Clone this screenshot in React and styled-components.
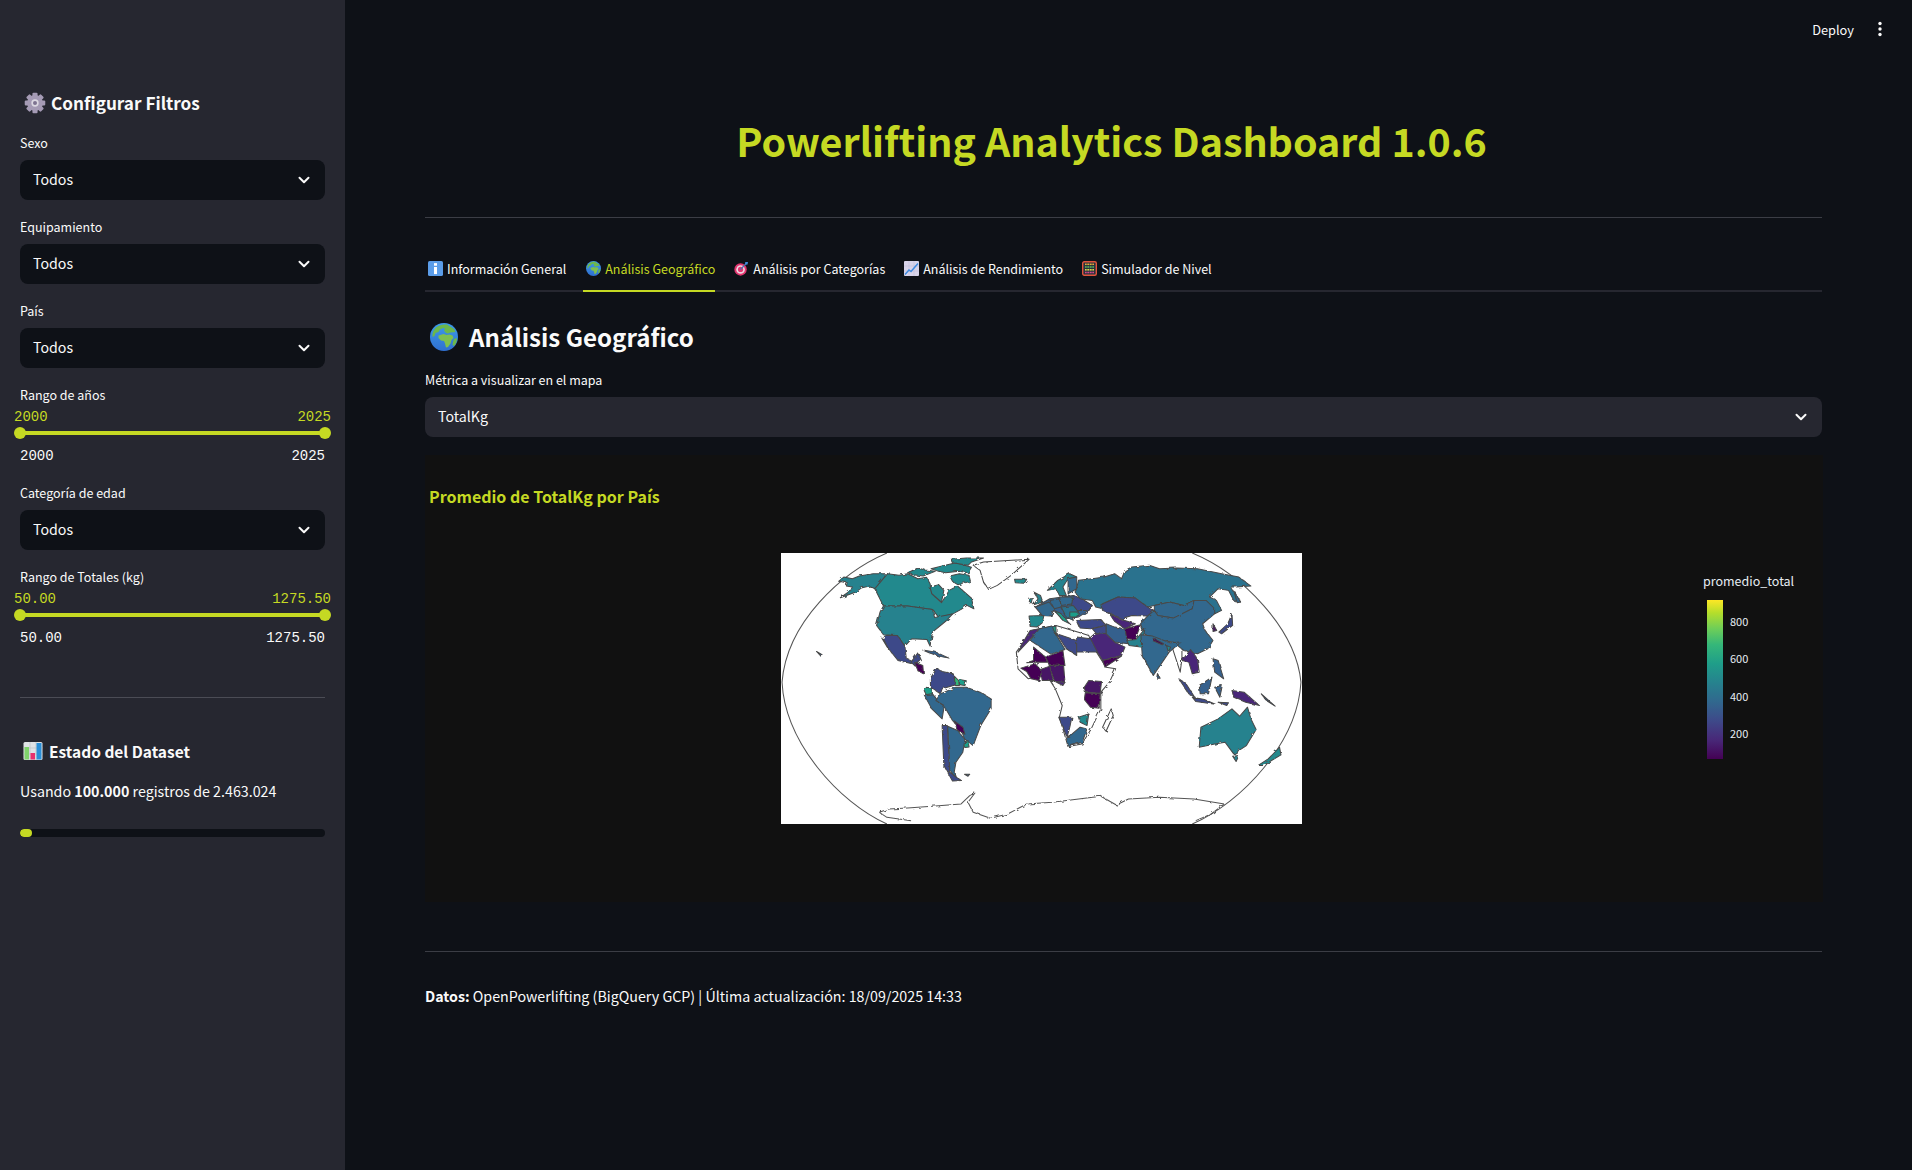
import React from 'react';
import styled, { createGlobalStyle } from 'styled-components';

const LIME = '#c5d923';
const SANS = '"Noto Sans CJK SC", "Noto Sans", sans-serif';
const MONO = '"Liberation Mono", monospace';

const Global = createGlobalStyle`
  html, body { margin: 0; padding: 0; background: #0e1117; }
  body { font-family: ${SANS}; color: #fafafa; overflow: hidden; }
  * { box-sizing: border-box; }
`;

const Page = styled.div`display: flex; width: 1912px; height: 1170px; position: relative; overflow: hidden;`;
const Sidebar = styled.aside`width: 345px; flex: none; background: #262730; padding: 88px 20px 0;`;
const SideTitle = styled.h2`display: flex; align-items: center; gap: 5px; margin: 0 0 15px; padding-left: 4px; height: 30px; font-size: 17.2px; line-height: 30px; font-weight: 700;`;
const Field = styled.div`margin-bottom: 17px;`;
const Label = styled.div`font-size: 12.5px; line-height: 20px; height: 20px; color: #fafafa;`;
const Select = styled.div`display: flex; align-items: center; justify-content: space-between; height: 40px; margin-top: 7px; padding: 0 13px 2px; border-radius: 8px; background: ${p => p.$bg}; font-size: 14.2px; line-height: 38px; color: #fafafa;`;
const SliderWrap = styled.div`margin-bottom: 19px;`;
const ThumbValues = styled.div`display: flex; justify-content: space-between; margin: 4px -6px 0; height: 16px; font: 14px/16px ${MONO}; color: ${LIME};`;
const Track = styled.div`display: flex; align-items: center; justify-content: space-between; height: 12px; margin: 2px 0 0; position: relative;
  &::before { content: ''; position: absolute; left: 0; right: 0; top: 4px; height: 4px; background: ${LIME}; }`;
const Handle = styled.span`width: 12px; height: 12px; border-radius: 50%; background: ${LIME}; position: relative; margin: 0 -6px;`;
const Ticks = styled.div`display: flex; justify-content: space-between; margin-top: 9px; height: 16px; font: 14px/16px ${MONO}; color: #fafafa;`;
const SideRule = styled.hr`border: 0; height: 1px; background: #4b4c55; margin: 51px 0 0;`;
const StatusTitle = styled.h3`display: flex; align-items: center; gap: 6px; margin: 39px 0 0; padding-left: 3px; height: 28px; font-size: 15.5px; line-height: 28px; font-weight: 700;`;
const StatusText = styled.p`margin: 14px 0 0; font-size: 14.25px; line-height: 24px; color: #fafafa; b { font-weight: 700; }`;
const Progress = styled.div`height: 8px; margin-top: 26px; border-radius: 4px; background: #0e1117; overflow: hidden;`;
const ProgressFill = styled.div`height: 100%; border-radius: 4px; background: ${LIME};`;

const Main = styled.main`flex: 1; min-width: 0; padding: 110px 90px 0 80px;`;
const Toolbar = styled.div`position: absolute; top: 17px; right: 29px; display: flex; align-items: center; gap: 23px; height: 24px; font-size: 12.8px; color: #fafafa;`;
const Title = styled.h1`margin: 0; padding-right: 24px; height: 64px; line-height: 60px; text-align: center; font-size: 39.4px; font-weight: 700; color: ${LIME};`;
const Rule = styled.hr`border: 0; height: 1px; background: #3b3d45; margin: ${p => p.$mt}px 0 0;`;
const Tabs = styled.div`display: flex; gap: 16px; height: 43px; margin-top: 31px; border-bottom: 2px solid #262730;`;
const Tab = styled.div`display: flex; align-items: center; gap: 4px; height: 43px; padding: 0 0 2px 3px; font-size: 12.5px; color: ${p => p.$active ? LIME : '#fafafa'}; border-bottom: 2px solid ${p => p.$active ? LIME : 'transparent'};
  &:first-child { margin-right: 1px; }`;
const Heading = styled.h2`display: flex; align-items: center; gap: 11px; margin: 25px 0 0; padding-left: 5px; height: 40px; line-height: 38px; font-size: 24.1px; font-weight: 700;`;
const MetricLabel = styled(Label)`margin-top: 13px;`;
const Chart = styled.section`height: 447px; width: 1398px; margin-top: 18px; padding: 30px 0 0 4px; background: #111111;`;
const ChartTitle = styled.div`height: 22px; line-height: 22px; font-size: 16px; font-weight: 700; color: ${LIME};`;
const ChartBody = styled.div`display: flex; align-items: flex-start; margin-top: 46px; padding-left: 352px;`;
const MapFrame = styled.svg`display: block; width: 521px; height: 271px; flex: none; background: #fff;`;
const Legend = styled.div`margin: 18px 0 0 auto; width: 120px; color: #e6edf3;`;
const LegendTitle = styled.div`font-size: 12.5px; line-height: 20px; height: 20px;`;
const LegendBody = styled.div`display: flex; gap: 7px; margin: 9px 0 0 4px;`;
const ColorBar = styled.div`width: 16px; height: 159px; background: linear-gradient(to top, #440154, #482878 12%, #3e4989 24%, #31688e 36%, #26828e 48%, #1f9e89 60%, #35b779 72%, #6ece58 82%, #b5de2b 92%, #fde725);`;
const LegendTicks = styled.div`padding-top: 13px;`;
const LegendTick = styled.div`height: 37.4px; line-height: 16px; font-size: 11px;`;
const Footer = styled.p`margin: 32px 0 0; height: 24px; line-height: 24px; font-size: 14.25px; color: #fafafa; b { font-weight: 700; }`;
const ChevronMark = styled.svg`margin-bottom: -2px; flex: none;`;

const Chevron = () => (
  <ChevronMark width="16" height="16" viewBox="0 0 16 16" fill="none" stroke="#fafafa" strokeWidth="2" strokeLinecap="round" strokeLinejoin="round"><path d="M3.5 5.8 8 10.2l4.5-4.4" /></ChevronMark>
);
const Kebab = () => (
  <svg width="6" height="16" viewBox="0 0 6 16" fill="#fafafa"><circle cx="3" cy="2.5" r="1.7" /><circle cx="3" cy="8" r="1.7" /><circle cx="3" cy="13.5" r="1.7" /></svg>
);
const GearIcon = () => (
  <svg width="22" height="22" viewBox="0 0 24 24"><g fill="#a59bb5">{[0, 45, 90, 135, 180, 225, 270, 315].map(a => <rect key={a} x="9.2" y="0.8" width="5.6" height="6" rx="1.2" transform={`rotate(${a} 12 12)`} />)}<circle cx="12" cy="12" r="8.6" /></g><circle cx="12" cy="12" r="4" fill="#dcd8e2" /><circle cx="12" cy="12" r="2.2" fill="#7d7390" /></svg>
);
const BarsIcon = () => (
  <svg width="20" height="20" viewBox="0 0 20 20"><rect x="0.5" y="1" width="19" height="18" rx="1.5" fill="#dfe3e6" /><path d="M0.5 7h19M0.5 13h19M7 1v18M13 1v18" stroke="#b8bfc4" strokeWidth=".6" /><rect x="1.5" y="6" width="4.5" height="12.5" fill="#7fd36b" /><rect x="7.5" y="12" width="4.5" height="6.5" fill="#e8316e" /><rect x="13.5" y="2" width="5" height="16.5" fill="#2a8fd8" /></svg>
);
const InfoIcon = () => (
  <svg width="15" height="15" viewBox="0 0 14 14"><rect width="14" height="14" rx="1.5" fill="#5b9de9" /><rect x="5.6" y="2" width="2.8" height="2.4" fill="#fff" /><rect x="5.6" y="5.6" width="2.8" height="6.6" fill="#fff" /></svg>
);
const GlobeIcon = ({ size = 15 }) => (
  <svg width={size} height={size} viewBox="0 0 28 28"><defs><linearGradient id="gl" x1="0" y1="0" x2="0" y2="1"><stop offset="0" stopColor="#3d9be9" /><stop offset="1" stopColor="#2f6fd0" /></linearGradient></defs><circle cx="14" cy="14" r="14" fill="url(#gl)" /><path d="M6 4.5C9 2 13 1 17 1.5l3 2 4 2.5 1.5 3-5 .5-3 1-2-1-1.500-2 1-2-2-.5-3 1.500-1.500 2.500-3 1-1 3-2 1C2 10 3.500 7 6 4.500z" fill="#6cb84a" /><path d="M8.500 12.500l5-1.500 3 1 3-.5 3 1 1 2.500-2 2-1 3.500-2.500 3.500-2 .5-1-4-1-2.500-3-.5-2.500-2.500z" fill="#7ec04f" /><path d="M24 16l3-1c0 3-1 6-3 8l-1.500-1 .5-3z" fill="#6cb84a" /></svg>
);
const TargetIcon = () => (
  <svg width="15" height="15" viewBox="0 0 16 16"><circle cx="7" cy="9" r="6.600" fill="#e0356f" /><circle cx="7" cy="9" r="4.600" fill="#efd6e0" /><circle cx="7" cy="9" r="2.800" fill="#e0356f" /><path d="M7 9l6-6.500" stroke="#4f6fb0" strokeWidth="1.400" /><path d="M12 1l3 0-.6 2.600-2.600.4z" fill="#3d8bd8" /></svg>
);
const ChartIcon = () => (
  <svg width="15" height="15" viewBox="0 0 15 15"><rect width="15" height="15" rx="1" fill="#d8d4ea" /><path d="M0 5h15M0 10h15M5 0v15M10 0v15" stroke="#bdb8d6" strokeWidth=".5" /><path d="M1 13.500 5 9l2 1.500 7-8" fill="none" stroke="#3f8be0" strokeWidth="1.500" /></svg>
);
const AbacusIcon = () => (
  <svg width="15" height="15" viewBox="0 0 15 15"><rect x=".7" y=".7" width="13.600" height="13.600" rx="1.500" fill="#28323c" stroke="#e2543c" strokeWidth="1.400" /><path d="M3 3.300h9" stroke="#e9ae3a" strokeWidth="1.500" /><path d="M3 6h9" stroke="#5bb85c" strokeWidth="1.500" /><path d="M3 8.800h9" stroke="#e4e04a" strokeWidth="1.500" /><path d="M3 11.500h9" stroke="#d4478c" strokeWidth="1.500" /><path d="M5 2v11M7.500 2v11M10 2v11" stroke="#28323c" strokeWidth=".6" /></svg>
);

const M = ['#440154', '#471465', '#482878', '#3e4989', '#35608d', '#31688e', '#2c728e', '#26828e', '#22898d', '#1f9e89', '#35b779'];
const lands = [
  // North America
  [7, '200,108 215,95 240,100 260,92 300,85 342,85 305,130 290,122 265,128 250,140 205,157 235,135 240,125 222,122 225,112'],
  [8, '342,85 375,90 400,85 430,100 455,96 465,115 470,145 498,172 515,145 520,135 545,122 565,140 585,158 592,190 572,180 555,192 530,206 490,216 472,192 400,182 330,182 305,130'],
  [8, '400,82 430,68 450,74 480,78 445,92 415,88'], [8, '468,70 500,62 540,52 585,66 575,82 550,78 510,82 490,78'], [8, '525,42 570,38 620,38 585,50 575,60 530,52'], [8, '522,92 550,85 578,90 582,108 545,118 530,108'], [8, '465,125 490,118 505,135 498,170 470,145'],
  [7, '330,182 400,182 472,192 478,216 530,206 512,226 472,260 465,302 456,282 412,280 392,302 370,270 330,268 310,240 320,200'],
  [3, '335,270 370,270 392,302 396,338 420,348 410,354 372,345 345,310 325,278 345,312 330,280'],
  [3, '410,350 430,322 440,345 422,362'], [0, '420,350 444,360 446,385 430,376'],
  [4, '444,314 482,320 520,338 490,332 462,322'], [4, '136,318 152,328 150,334'],
  // South America
  [3, '485,368 500,378 532,385 540,418 500,430 495,445 466,425 466,398'],
  [9, '455,425 470,428 472,445 455,450 448,435'],
  [10, '535,392 548,405 550,420 538,420'], [9, '550,402 570,406 566,420 550,418'],
  [5, '448,448 472,445 485,462 506,482 500,520 470,490'],
  [5, '495,445 540,425 570,425 610,440 642,460 642,490 612,540 590,600 565,580 556,555 530,525 505,480 482,465'],
  [0, '535,526 560,545 566,566 545,555'], [9, '558,592 575,585 578,604 566,606'],
  [5, '516,542 545,555 566,582 560,620 540,650 535,680 540,700 522,672'],
  [3, '500,540 515,540 522,680 556,705 530,706 505,660'], [4, '565,686 580,686 575,692'],
  // Europe
  [4, '770,185 812,160 880,150 935,180 925,195 895,215 860,220 820,195'],
  [7, '805,135 835,105 870,85 890,95 865,100 850,125 860,150 840,150 830,130'], [5, '865,100 890,95 890,130 865,145'],
  [7, '765,140 785,150 792,170 765,178 778,160'], [8, '755,160 765,160 762,172 752,172'], [8, '710,102 745,102 738,114 712,112'],
  [8, '752,212 795,210 790,232 775,245 755,243'], [5, '770,185 810,170 825,190 815,212 790,210'],
  [5, '812,165 840,160 845,185 825,190'], [5, '840,155 875,155 880,175 845,180'], [3, '880,150 905,160 935,180 925,195 890,195 875,180'],
  [9, '825,195 845,205 870,235 850,225'], [6, '845,185 880,180 895,200 875,205 880,225 860,215'], [9, '870,200 895,200 890,215 870,215'],
  // Asia
  [6, '890,130 895,105 935,100 970,95 1000,85 1020,100 1030,75 1050,65 1100,60 1130,70 1180,68 1240,70 1310,85 1360,95 1395,122 1350,125 1335,125 1365,170 1345,165 1330,135 1300,130 1275,155 1295,165 1310,195 1290,205 1280,190 1265,165 1230,165 1200,180 1160,170 1115,180 1095,185 1060,158 1010,155 965,175 975,192 945,185 935,165 900,160 885,140'],
  [3, '960,178 1010,155 1060,158 1095,185 1115,195 1095,212 1050,210 1020,220 990,205 965,195'],
  [2, '985,205 1020,222 1060,235 1030,250 1000,228'],
  [5, '1115,180 1160,170 1200,180 1230,165 1225,190 1170,218 1125,210 1115,195'],
  [5, '1095,212 1115,195 1125,210 1170,218 1225,190 1230,165 1265,165 1290,190 1290,205 1255,235 1262,255 1285,285 1270,310 1240,325 1200,315 1170,290 1130,285 1085,265 1075,235'],
  [3, '1340,205 1342,240 1310,265 1302,260 1328,235'], [1, '1285,235 1296,255 1285,258'], [5, '1345,135 1365,170 1355,172'],
  [3, '890,225 960,222 975,240 930,250 900,248'],
  [4, '975,235 1000,245 1030,250 1040,295 1000,290 975,265'], [3, '935,250 975,240 975,265 945,262'],
  [2, '925,280 945,262 975,265 1000,290 1030,305 1020,330 965,345'], [0, '965,345 1020,332 972,365'],
  [0, '1030,250 1075,238 1060,282 1035,280'], [7, '1035,285 1062,282 1088,250 1076,305 1042,300'],
  [5, '1076,268 1110,272 1160,292 1192,290 1158,320 1112,390 1080,330'], [0, '1112,278 1142,295 1138,298 1110,285'], [8, '1150,300 1162,305 1156,320'],
  [2, '1195,345 1220,312 1240,340 1245,380 1225,385 1215,350'], [3, '1186,400 1205,412 1232,455 1215,445'], [4, '1245,420 1282,395 1272,445 1248,445'],
  [3, '1225,455 1260,462 1292,476 1235,468'], [3, '1300,470 1330,472 1325,480'], [2, '1340,435 1375,440 1420,480 1380,470 1345,455'], [4, '1285,340 1300,345 1316,400 1290,380'], [4, '1290,425 1312,420 1305,455'], [4, '1425,445 1465,482 1440,465'],
  [7, '1250,545 1300,520 1340,490 1362,512 1385,485 1395,520 1410,552 1382,600 1345,625 1320,590 1290,595 1245,605'],
  [7, '1342,632 1360,630 1352,648'], [8, '1415,660 1445,640 1478,605 1482,628 1430,660'], [4, '1124,384 1132,398 1122,398'],
];
const africa = '760,255 830,240 900,262 925,270 935,300 975,365 1003,370 985,410 960,440 960,490 932,550 905,595 865,603 840,515 848,480 828,430 800,385 750,400 720,370 715,320';
const africaLands = [
  [2, '755,255 782,250 752,285 720,320 735,290'], [5, '782,250 825,240 832,270 856,312 815,326 755,285'], [9, '820,245 830,242 830,270'],
  [3, '832,265 890,285 890,330 860,310'], [3, '890,275 930,280 950,320 890,320'], [0, '765,305 800,335 805,350 770,350 745,352 765,345'],
  [0, '800,335 850,315 856,360 810,358'], [1, '810,360 852,360 856,410 826,408'], [2, '826,408 856,410 850,420 822,405'], [0, '728,368 770,355 790,378 780,405 758,400 745,378'],
  [1, '785,372 812,362 822,405 790,405'], [1, '925,405 962,408 958,443 915,440 912,425'], [0, '915,442 958,445 955,488 930,485 912,462'],
  [3, '838,515 876,515 870,545 862,575'], [8, '895,515 925,505 920,540 900,530'], [5, '860,575 876,566 900,545 920,550 906,590 866,603'],
];

const MapGraphic = () => (
  <MapFrame viewBox="33 23 1510 812" preserveAspectRatio="none">
    <defs>
      <filter id="coast" x="-2%" y="-2%" width="104%" height="104%">
        <feTurbulence type="fractalNoise" baseFrequency="0.07" numOctaves="2" seed="4" />
        <feDisplacementMap in="SourceGraphic" scale="9" />
      </filter>
    </defs>
    <path d="M340 23C210 80 50 230 36 410C45 590 200 770 340 835M1225 23C1370 85 1525 250 1540 410C1530 590 1370 770 1225 835" fill="none" strokeWidth="3" stroke="#555" />
    <g stroke="#484848" strokeWidth="3" strokeLinejoin="round" filter="url(#coast)">
      <polygon points="590,60 620,50 752,42 700,90 660,120 635,132 620,110 610,75" fill="#fff" />
      <polygon points={africa} fill="#fff" />
      <polygon points="990,490 996,510 975,557 965,545" fill="#fff" />
      <polygon points="1165,300 1195,290 1195,340 1190,380" fill="#fff" />
      <path d="M318 800 345 790 400 787 470 782 490 780 555 775 580 750 595 742 575 770 590 800 640 818 690 805 745 775 820 770 960 752 1005 778 1040 760 1130 755 1230 760 1318 775 1280 805 1235 825M318 800 340 815 410 825" fill="none" strokeWidth="3" stroke="#555" />
      {lands.map(([c, pts], i) => <polygon key={i} points={pts} fill={M[c]} />)}
      {africaLands.map(([c, pts], i) => <polygon key={i} points={pts} fill={M[c]} />)}
    </g>
  </MapFrame>
);

const Dropdown = ({ label }) => (
  <Field>
    <Label>{label}</Label>
    <Select $bg="#0e1117">Todos<Chevron /></Select>
  </Field>
);
const RangeSlider = ({ label, min, max }) => (
  <SliderWrap>
    <Label>{label}</Label>
    <ThumbValues><span>{min}</span><span>{max}</span></ThumbValues>
    <Track><Handle /><Handle /></Track>
    <Ticks><span>{min}</span><span>{max}</span></Ticks>
  </SliderWrap>
);

const tabs = [
  [InfoIcon, 'Información General'], [GlobeIcon, 'Análisis Geográfico', true], [TargetIcon, 'Análisis por Categorías'],
  [ChartIcon, 'Análisis de Rendimiento'], [AbacusIcon, 'Simulador de Nivel'],
];

export default function App() {
  return (
    <Page>
      <Global />
      <Sidebar>
        <SideTitle><GearIcon />Configurar Filtros</SideTitle>
        <Dropdown label="Sexo" />
        <Dropdown label="Equipamiento" />
        <Dropdown label="País" />
        <RangeSlider label="Rango de años" min="2000" max="2025" />
        <Dropdown label="Categoría de edad" />
        <RangeSlider label="Rango de Totales (kg)" min="50.00" max="1275.50" />
        <SideRule />
        <StatusTitle><BarsIcon />Estado del Dataset</StatusTitle>
        <StatusText>Usando <b>100.000</b> registros de 2.463.024</StatusText>
        <Progress><ProgressFill style={{ width: `${(100000 / 2463024) * 100}%` }} /></Progress>
      </Sidebar>
      <Main>
        <Toolbar><span>Deploy</span><Kebab /></Toolbar>
        <Title>Powerlifting Analytics Dashboard 1.0.6</Title>
        <Rule $mt={43} />
        <Tabs>
          {tabs.map(([Icon, text, active]) => <Tab key={text} $active={active}><Icon />{text}</Tab>)}
        </Tabs>
        <Heading><GlobeIcon size={28} />Análisis Geográfico</Heading>
        <MetricLabel>Métrica a visualizar en el mapa</MetricLabel>
        <Select $bg="#262730">TotalKg<Chevron /></Select>
        <Chart>
          <ChartTitle>Promedio de TotalKg por País</ChartTitle>
          <ChartBody>
            <MapGraphic />
            <Legend>
              <LegendTitle>promedio_total</LegendTitle>
              <LegendBody>
                <ColorBar />
                <LegendTicks>{[800, 600, 400, 200].map(t => <LegendTick key={t}>{t}</LegendTick>)}</LegendTicks>
              </LegendBody>
            </Legend>
          </ChartBody>
        </Chart>
        <Rule $mt={49} />
        <Footer><b>Datos:</b> OpenPowerlifting (BigQuery GCP) | Última actualización: 18/09/2025 14:33</Footer>
      </Main>
    </Page>
  );
}
